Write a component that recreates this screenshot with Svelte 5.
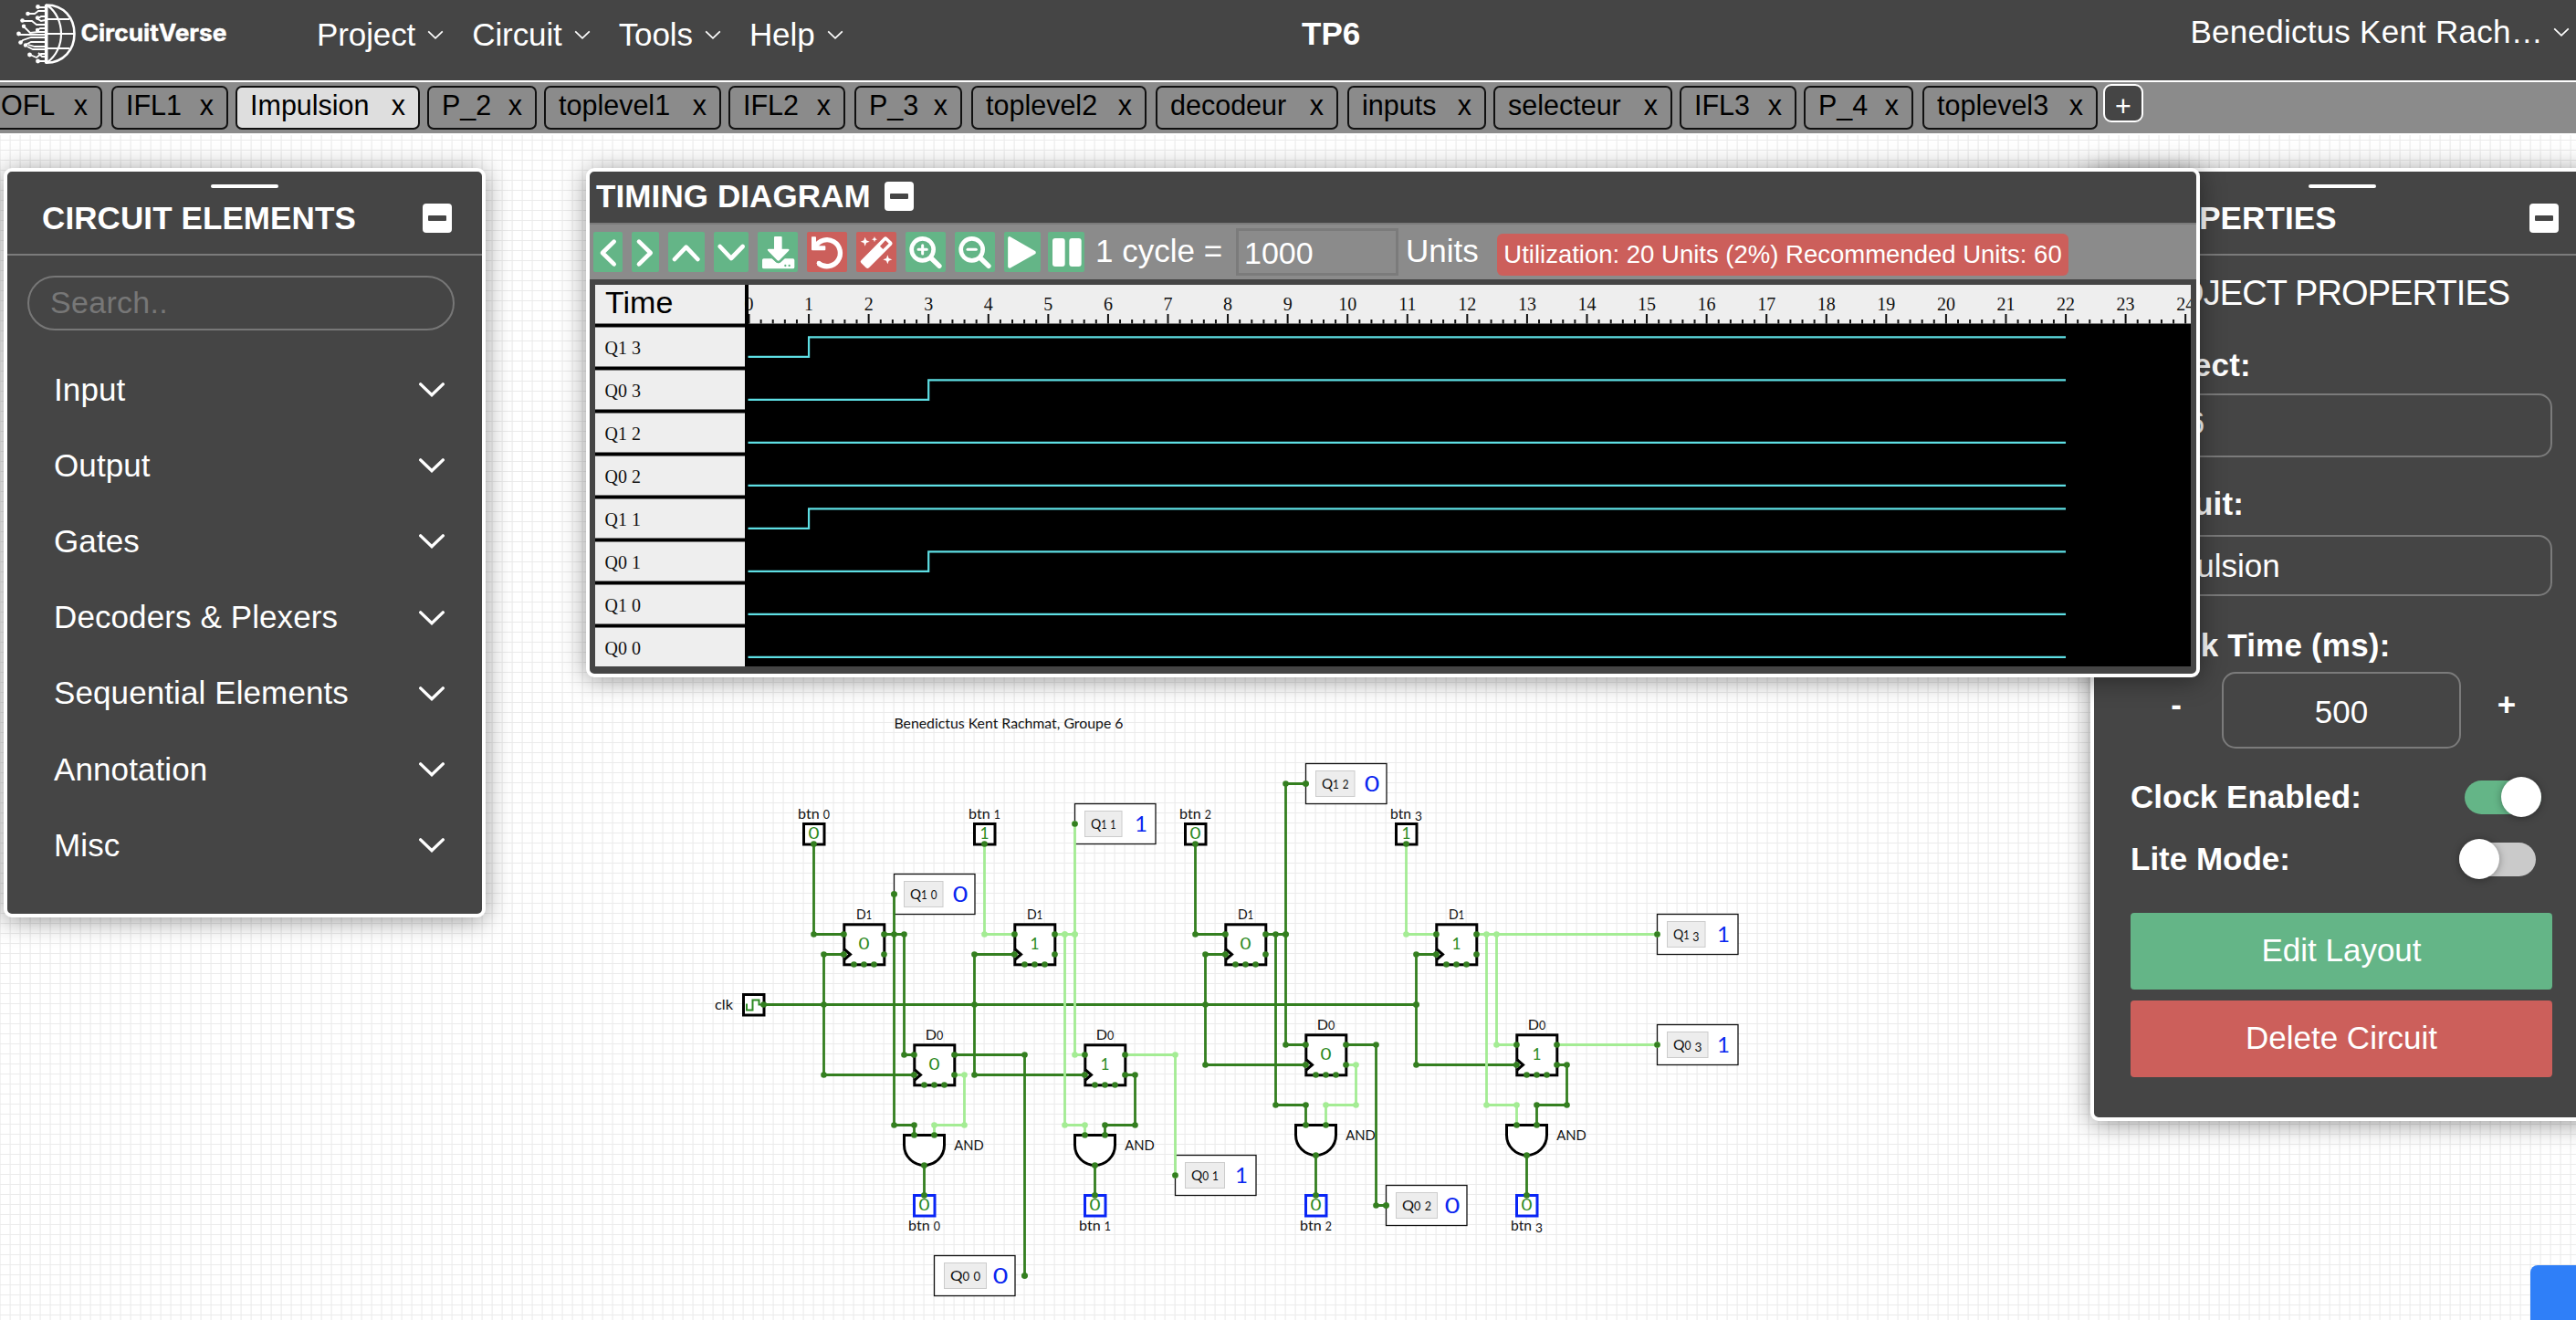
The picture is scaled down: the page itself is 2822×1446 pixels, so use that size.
<script>
  const menus = ['Project', 'Circuit', 'Tools', 'Help'];

  const tabs = [
    { name: 'OFL', width: 127, gap: 10 },
    { name: 'IFL1', width: 128, gap: 8 },
    { name: 'Impulsion', width: 202, gap: 8, active: true },
    { name: 'P_2', width: 120, gap: 8 },
    { name: 'toplevel1', width: 194, gap: 8 },
    { name: 'IFL2', width: 128, gap: 10 },
    { name: 'P_3', width: 118, gap: 10 },
    { name: 'toplevel2', width: 192, gap: 10 },
    { name: 'decodeur', width: 200, gap: 10 },
    { name: 'inputs', width: 152, gap: 8 },
    { name: 'selecteur', width: 196, gap: 8 },
    { name: 'IFL3', width: 128, gap: 8 },
    { name: 'P_4', width: 120, gap: 10 },
    { name: 'toplevel3', width: 192, gap: 6 }
  ];

  const categories = ['Input', 'Output', 'Gates', 'Decoders & Plexers', 'Sequential Elements', 'Annotation', 'Misc'];

  // Timing plot: one time unit is `unit` pixels wide, one signal row is 47 pixels tall.
  const unit = 65.57;
  const origin = 168.5;
  const signals = [
    { name: 'Q1 3', rise: 1 },
    { name: 'Q0 3', rise: 3 },
    { name: 'Q1 2', rise: null },
    { name: 'Q0 2', rise: null },
    { name: 'Q1 1', rise: 1 },
    { name: 'Q0 1', rise: 3 },
    { name: 'Q1 0', rise: null },
    { name: 'Q0 0', rise: null }
  ];
  const ticks = Array.from({ length: 122 }, (_, i) => i);

  function trace(rise, row) {
    const low = 78.8 + row * 47;
    const high = low - 21.5;
    const end = origin + 22 * unit;
    if (rise === null) return `M${origin - 1} ${low}H${end}`;
    return `M${origin - 1} ${low}H${origin + rise * unit}V${high}H${end}`;
  }

  // Schematic coordinates are in grid cells.
  const G = 11;
  const px = (n) => n * G + 0.5;
  const wires = [
    { on: 0, p: [[81, 84], [81, 93], [84, 93]] },
    { on: 0, p: [[76, 100], [141, 100]] },
    { on: 0, p: [[84, 95], [82, 95], [82, 107], [91, 107]] },
    { on: 0, p: [[101, 95], [97, 95], [97, 107], [108, 107]] },
    { on: 0, p: [[122, 95], [120, 95], [120, 106], [130, 106]] },
    { on: 0, p: [[143, 95], [141, 95], [141, 106], [151, 106]] },
    { on: 0, p: [[88, 93], [90, 93], [90, 105], [91, 105]] },
    { on: 0, p: [[89, 89], [89, 112], [91, 112], [91, 113]] },
    { on: 0, p: [[95, 105], [102, 105], [102, 127]] },
    { on: 1, p: [[95, 107], [96, 107], [96, 112], [93, 112], [93, 113]] },
    { on: 0, p: [[92, 116], [92, 119]] },
    { on: 1, p: [[98, 84], [98, 93], [101, 93]] },
    { on: 1, p: [[105, 93], [107, 93], [107, 105], [108, 105]] },
    { on: 1, p: [[107, 82], [107, 93]] },
    { on: 1, p: [[106, 93], [106, 112], [108, 112], [108, 113]] },
    { on: 1, p: [[112, 105], [117, 105], [117, 117]] },
    { on: 0, p: [[112, 107], [113, 107], [113, 112], [110, 112], [110, 113]] },
    { on: 0, p: [[109, 116], [109, 119]] },
    { on: 0, p: [[119, 84], [119, 93], [122, 93]] },
    { on: 0, p: [[126, 93], [128, 93], [128, 104], [130, 104]] },
    { on: 0, p: [[130, 78], [128, 78], [128, 93]] },
    { on: 0, p: [[127, 93], [127, 110], [130, 110], [130, 112]] },
    { on: 0, p: [[134, 104], [137, 104], [137, 120], [138, 120]] },
    { on: 1, p: [[134, 106], [135, 106], [135, 110], [132, 110], [132, 112]] },
    { on: 0, p: [[131, 115], [131, 119]] },
    { on: 1, p: [[140, 84], [140, 93], [143, 93]] },
    { on: 1, p: [[147, 93], [165, 93]] },
    { on: 1, p: [[149, 93], [149, 104], [151, 104]] },
    { on: 1, p: [[148, 93], [148, 110], [151, 110], [151, 112]] },
    { on: 1, p: [[155, 104], [165, 104]] },
    { on: 0, p: [[155, 106], [156, 106], [156, 110], [153, 110], [153, 112]] },
    { on: 0, p: [[152, 115], [152, 119]] }
  ];
  const taps = [[82, 100], [97, 100], [120, 100], [141, 100], [89, 93]];
  const ends = [[89, 89], [107, 82], [117, 117], [102, 127], [130, 78], [138, 120], [165, 93], [165, 104], [76, 100]];
  const flops = [
    { x: 86, y: 94, name: 'D1', v: '0' }, { x: 93, y: 106, name: 'D0', v: '0' },
    { x: 103, y: 94, name: 'D1', v: '1' }, { x: 110, y: 106, name: 'D0', v: '1' },
    { x: 124, y: 94, name: 'D1', v: '0' }, { x: 132, y: 105, name: 'D0', v: '0' },
    { x: 145, y: 94, name: 'D1', v: '1' }, { x: 153, y: 105, name: 'D0', v: '1' }
  ];
  const inputs = [
    { x: 81, name: 'btn 0', v: '0' }, { x: 98, name: 'btn 1', v: '1' },
    { x: 119, name: 'btn 2', v: '0' }, { x: 140, name: 'btn 3', v: '1' }
  ];
  const gates = [
    { x: 92, y: 113, name: 'btn 0' }, { x: 109, y: 113, name: 'btn 1' },
    { x: 131, y: 112, name: 'btn 2' }, { x: 152, y: 112, name: 'btn 3' }
  ];
  const flags = [
    { x: 89, y: 89, name: 'Q1 0', w: 42.5, v: '0' },
    { x: 107, y: 82, name: 'Q1 1', w: 40.5, v: '1' },
    { x: 130, y: 78, name: 'Q1 2', w: 42.5, v: '0' },
    { x: 165, y: 93, name: 'Q1 3', w: 41.5, v: '1' },
    { x: 165, y: 104, name: 'Q0 3', w: 44.5, v: '1' },
    { x: 138, y: 120, name: 'Q0 2', w: 45, v: '0' },
    { x: 117, y: 117, name: 'Q0 1', w: 43, v: '1' },
    { x: 93, y: 127, name: 'Q0 0', w: 46, v: '0' }
  ];

  // Old-style figures: 0-2 sit at x-height, 3 hangs below the baseline.
  const figures = (s) => [...s].map((c, i, a) => ({
    c: c === ' ' ? '\u00a0' : c,
    size: '012'.includes(c) ? 12.4 : c === '3' ? 14 : 16,
    dy: (c === '3' ? 2 : 0) - (a[i - 1] === '3' ? 2 : 0)
  }));
</script>

{#snippet chevron(cls)}
  <svg class={cls} viewBox="0 0 30 18"><path d="M2 2L15 14.5L28 2" /></svg>
{/snippet}

{#snippet minus()}
  <svg class="minus" viewBox="0 0 32 32"><rect width="32" height="32" rx="4" fill="#fff" /><rect x="6" y="13" width="20" height="6" rx="1" fill="#454545" /></svg>
{/snippet}

{#snippet label(x, y, s, w, anchor = 'middle')}
  <text {x} {y} text-anchor={anchor} textLength={w} lengthAdjust="spacingAndGlyphs" class="lbl">{#each figures(s) as f}<tspan font-size={f.size} dy={f.dy}>{f.c}</tspan>{/each}</text>
{/snippet}

{#snippet digit(x, y, v)}
  <text {x} {y} text-anchor="middle" class="digit" textLength={v === '0' ? 12 : 10} lengthAdjust="spacingAndGlyphs">{v}</text>
{/snippet}

<div class="app">
  <header>
    <svg class="logo" viewBox="0 0 260 75">
      <g fill="none" stroke="#fff" stroke-width="2.2">
        <path d="M50.7 5V69.5" stroke-width="3.6" />
        <path d="M50 5.5C70 5 81.500 20 81.500 37S70 69 50 68.700" stroke-width="2.600" />
        <path d="M52 6C72 20 72 54 52 68M51 21H76M51 37H82M51 53H76" />
        <path d="M50 8H42M50 12H42L38 15H31M50 18H45L42 20M50 22L45 23L40 20M50 27H40L35 23H25M50 31H44L41 33M50 35H42L33 36L26 29M50 38H21M50 41H34L25 44L22 47M50 46H34L28 49M50 51H38L31 49M50 54H36L30 51M50 59H45L40 63L33 60M50 62H46L42 58M50 67H42" stroke-width="1.800" />
      </g>
      <g fill="#fff">
        <circle cx="41.500" cy="7.500" r="2.400" /><circle cx="30.500" cy="15" r="2.300" /><circle cx="24.500" cy="22.500" r="2.300" />
        <circle cx="26" cy="28.800" r="2.200" /><circle cx="20.500" cy="37" r="2.400" /><circle cx="22.500" cy="46.500" r="2.300" />
        <circle cx="28" cy="49.500" r="2.200" /><circle cx="32.500" cy="60" r="2.400" /><circle cx="41.500" cy="67" r="2.400" />
        <circle cx="41" cy="19.500" r="2.200" /><circle cx="41" cy="33" r="2.200" />
      </g>
      <text x="88.500" y="45.300" textLength="160" lengthAdjust="spacingAndGlyphs" class="brand">CircuitVerse</text>
    </svg>
    <nav>
      {#each menus as m}<div class="menu"><span>{m}</span>{@render chevron('small')}</div>{/each}
    </nav>
    <div class="title">TP6</div>
    <div class="user"><span>Benedictus Kent Rach…</span>{@render chevron('small')}</div>
  </header>

  <div class="tabs">
    {#each tabs as t}
      <div class="tab" class:active={t.active} style:width="{t.width}px" style:margin-right="{t.gap}px"><span>{t.name}</span><span>x</span></div>
    {/each}
    <div class="add">+</div>
  </div>

  <main>
    <svg class="board" viewBox="0 148 2822 1298">
      <defs>
        <pattern id="grid" width="11" height="11" patternUnits="userSpaceOnUse">
          <rect x="0" y="0" width="1" height="11" fill="#f2f2f2" />
          <rect x="10" y="0" width="1" height="11" fill="#f6f6f6" />
          <rect x="0" y="10" width="11" height="1" fill="#ebebeb" />
        </pattern>
      </defs>
      <rect y="148" width="2822" height="1298" fill="url(#grid)" />

      <text x="979.500" y="798" textLength="251" lengthAdjust="spacingAndGlyphs" class="lbl" font-size="16">Benedictus Kent Rachmat, Groupe 6</text>

      {#each flags as f}
        <rect x={px(f.x)} y={px(f.y) - 22} width="88.500" height="44" fill="#fff" stroke="#111" stroke-width="1.300" />
        <rect x={px(f.x) + 11} y={px(f.y) - 14} width={f.w} height="28" fill="#ededed" stroke="#ccc" />
        {@render label(px(f.x) + 11 + f.w / 2, px(f.y) + 5.5, f.name, f.w - 13)}
        <text x={px(f.x) + 72.5} y={px(f.y) + 8.6} text-anchor="middle" class="value" textLength={f.v === '0' ? 16.5 : 14} lengthAdjust="spacingAndGlyphs">{f.v}</text>
      {/each}

      {#each gates as g}{@render label(px(g.x) + 49, px(g.y) + 16, 'AND', 32.5)}{/each}

      {#each wires as w}
        <polyline points={w.p.map(([x, y]) => `${px(x)},${px(y)}`).join(' ')} class="wire" class:on={w.on} />
        {#each w.p as [x, y]}<circle cx={px(x)} cy={px(y)} r="3.300" class="node" class:on={w.on} />{/each}
      {/each}
      {#each taps as [x, y]}<circle cx={px(x)} cy={px(y)} r="3.300" class="node" />{/each}
      <circle cx={px(106)} cy={px(93)} r="3.300" class="node on" />

      {#each inputs as b}
        <rect x={px(b.x) - 11} y={px(83) - 11} width="22.500" height="22.500" class="part" />
        {@render label(px(b.x), 896.5, b.name, 35)}
        {@render digit(px(b.x), 919, b.v)}
        <circle cx={px(b.x)} cy={px(84)} r="3.300" class="node" />
      {/each}

      <rect x={px(75) - 11} y={px(100) - 11} width="22.500" height="22.500" class="part" />
      <path d="M818 1099.500V1106.500H824.500V1095.500H831.500V1100.500H836" fill="none" stroke="#2c8a22" stroke-width="2" />
      {@render label(793, 1105.5, 'clk', 20)}

      {#each flops as f}
        <rect x={px(f.x) - 21.7} y={px(f.y) - 21.7} width="44" height="44" class="part" />
        <path d="M{px(f.x) - 22} {px(f.y) + 5}L{px(f.x) - 15} {px(f.y) + 11}L{px(f.x) - 22} {px(f.y) + 17}" class="part" />
        {@render label(px(f.x), px(f.y) - 28, f.name, f.name === 'D1' ? 17 : 19.5)}
        {@render digit(px(f.x), px(f.y) + 5.6, f.v)}
        {#each [[-2, -1], [-2, 1], [2, -1], [2, 1], [-1, 2], [0, 2], [1, 2]] as [dx, dy]}
          <circle cx={px(f.x + dx)} cy={px(f.y + dy)} r="3.300" class="node" />
        {/each}
      {/each}

      {#each gates as g}
        <path d="M{px(g.x) - 22} {px(g.y)}H{px(g.x) + 22}V{px(g.y) + 11}A22 22 0 0 1 {px(g.x) - 22} {px(g.y) + 11}Z" class="part" />
        <rect x={px(g.x) - 11} y={px(120) - 11} width="22.500" height="22.500" class="part out" />
        {@render digit(px(g.x), 1325.5, '0')}
        {@render label(px(g.x), 1347.5, g.name, 35)}
        {#each [[g.x - 1, g.y], [g.x + 1, g.y], [g.x, g.y + 3], [g.x, 119]] as [x, y]}
          <circle cx={px(x)} cy={px(y)} r="3.300" class="node" />
        {/each}
      {/each}
      {#each ends as [x, y]}<circle cx={px(x)} cy={px(y)} r="3.300" class="node" />{/each}
    </svg>

    <section class="panel elements">
      <div class="head"><i class="grip"></i><div class="headrow"><b>CIRCUIT ELEMENTS</b>{@render minus()}</div></div>
      <div class="search">Search..</div>
      <ul>
        {#each categories as c}<li><span>{c}</span>{@render chevron('big')}</li>{/each}
      </ul>
    </section>

    <section class="panel properties">
      <div class="head"><i class="grip"></i><div class="headrow"><b>PROPERTIES</b>{@render minus()}</div></div>
      <div class="body">
        <h2>PROJECT PROPERTIES</h2>
        <label class="project" for="p">Project:</label>
        <div class="field first" id="p">TP6</div>
        <label class="circuit" for="c">Circuit:</label>
        <div class="field second" id="c">Impulsion</div>
        <label class="clock" for="t">Clock Time (ms):</label>
        <div class="stepper"><b>-</b><div class="field interval" id="t">500</div><b>+</b></div>
        <div class="switch enabled"><b>Clock Enabled:</b><i class="track on"></i></div>
        <div class="switch lite"><b>Lite Mode:</b><i class="track"></i></div>
        <div class="btn green">Edit Layout</div>
        <div class="btn red">Delete Circuit</div>
      </div>
    </section>

    <section class="panel timing">
      <div class="timehead"><b>TIMING DIAGRAM</b>{@render minus()}</div>
      <div class="toolbar">
        <svg width="32" viewBox="0 0 96 132"><path class="ln" d="M68 32L30 69L68 106" /></svg>
        <svg width="30" viewBox="0 0 90 132"><path class="ln" d="M24 32L62 69L24 106" /></svg>
        <svg width="40" viewBox="0 0 120 132"><path class="ln" d="M21 90L59 50L97 90" /></svg>
        <svg width="38" viewBox="0 0 114 132"><path class="ln" d="M20 48L57 87L95 48" /></svg>
        <svg width="44" viewBox="0 0 132 132">
          <path d="M54 18Q54 15 57 15H77Q80 15 80 18V56H100Q106 57 102 62L72 93Q68 97 64 93L34 62Q30 57 36 56H54Z" />
          <path d="M20 88H48L60 100Q68 106 76 100L88 88H116Q121 88 121 93V116Q121 121 116 121H20Q15 121 15 116V93Q15 88 20 88Z" />
          <path d="M36 76L63 99Q68 103 73 99L100 76" fill="none" stroke="#64b587" stroke-width="3.500" />
          <circle cx="91" cy="111" r="3.500" fill="#64b587" /><circle cx="104" cy="111" r="3.500" fill="#64b587" />
        </svg>
        <svg width="44" viewBox="0 0 132 132" class="danger">
          <path d="M15 18Q15 16 17 16H27Q30 16 30 19V46H58Q61 46 61 49V58Q61 61 58 61H18Q15 61 15 58Z" />
          <path d="M27 50A43.500 43.500 0 1 1 38 103" fill="none" stroke="#fff" stroke-width="16" />
          <circle cx="39" cy="102.500" r="7" />
        </svg>
        <svg width="44" viewBox="0 0 132 132" class="danger">
          <path d="M16 94L91 18Q96 13 101 18L117 33Q121 38 117 43L42 118Q37 122 32 118L16 102Q12 98 16 94Z" />
          <path d="M78 47L96 28L107 38L88 57Z" fill="#cc5f5b" />
          <path d="M29 17L33 28L44 32L33 36L29 47L25 36L14 32L25 28ZM60 15L62.500 22L69 24.500L62.500 27L60 34L57.500 27L51 24.500L57.500 22ZM103 76L107 87L118 91L107 95L103 106L99 95L88 91L99 87Z" />
        </svg>
        <svg width="44" viewBox="0 0 132 132"><circle cx="56" cy="58" r="36" class="lens" /><path class="handle" d="M85 87L111 112" /><path class="sign" d="M42 58H70M56 44V72" /></svg>
        <svg width="44" viewBox="0 0 132 132"><circle cx="56" cy="58" r="36" class="lens" /><path class="handle" d="M85 87L111 112" /><path class="sign" d="M42 58H70" /></svg>
        <svg width="40" viewBox="0 0 120 132" class="play"><path d="M18 21V114L99 68Z" stroke="#fff" stroke-width="11" stroke-linejoin="round" /></svg>
        <svg width="40" viewBox="0 0 120 132"><rect x="15" y="21" width="41" height="93" rx="9" /><rect x="70" y="21" width="40" height="93" rx="9" /></svg>
        <span class="cycle">1 cycle =</span>
        <div class="units">1000</div>
        <span class="unitlabel">Units</span>
        <div class="badge">Utilization: 20 Units (2%) Recommended Units: 60</div>
      </div>
      <svg class="plot" viewBox="0 0 1748 418">
        <rect width="1748" height="418" fill="#000" />
        <rect width="164" height="42.500" fill="#eee" />
        <rect x="168" width="1580" height="42.500" fill="#eee" />
        <text x="11" y="30.500" class="timecol">Time</text>
        {#each ticks as i}
          <rect x={origin - 1 + (i * unit) / 5} y={i % 5 ? 38 : 32} width="2" height={i % 5 ? 4.5 : 10.5} fill="#111" />
          {#if i % 5 === 0}<text x={origin + (i * unit) / 5} y="27.500" text-anchor="middle" class="num">{i / 5}</text>{/if}
        {/each}
        <rect x="164" width="4" height="43" fill="#000" />
        {#each signals as s, i}
          <rect y={46.5 + i * 47} width="164" height="43" fill="#eee" />
          <text x="10.500" y={76 + i * 47} class="num">{s.name}</text>
          <path d={trace(s.rise, i)} fill="none" stroke="#5edfe4" stroke-width="2.200" />
        {/each}
      </svg>
    </section>

    <div class="report"></div>
  </main>
</div>

<style>
  :global(body) { margin: 0; background: #fff; }
  * { box-sizing: border-box; }
  .app { width: 2822px; height: 1446px; overflow: hidden; display: flex; flex-direction: column; font: 35px/40px "Liberation Sans", Arial, sans-serif; color: #fff; background: #fff; }
  header { height: 90px; flex: none; background: #454545; border-bottom: 2px solid #fff; display: flex; align-items: flex-start; }
  .logo { width: 260px; height: 75px; }
  .brand { font: 700 25px Inter, sans-serif; fill: #fff; stroke: #fff; stroke-width: .4px; }
  nav { display: flex; gap: 31px; padding: 18px 0 0 87px; width: 1166px; }
  .menu, .user { display: flex; align-items: center; }
  .menu span { letter-spacing: -.1px; }
  .small { width: 18px; height: 11px; margin-left: 13px; }
  .small path { fill: none; stroke: #fff; stroke-width: 2.8; }
  .title { font-weight: 700; padding-top: 17px; }
  .user { margin-left: auto; padding: 15px 7px 0 0; }
  .user span { letter-spacing: .25px; }
  .user .small { margin-left: 11px; }

  .tabs { height: 56px; flex: none; background: #8b8b8b; display: flex; align-items: flex-start; padding-top: 4px; font-size: 30.5px; color: #000; }
  .tab { height: 48px; flex: none; border: 2px solid #101010; border-radius: 7px; display: flex; justify-content: space-between; align-items: center; padding: 0 14px 7px 14px; }
  .tab:first-child { margin-left: -15px; }
  .tab.active { background: #dedede; }
  .add { width: 44px; height: 42px; margin-top: -2px; border: 2px solid #fff; border-radius: 9px; background: #454545; color: #fff; display: flex; align-items: center; justify-content: center; padding-top: 6px; }

  main { position: relative; flex: 1; padding-top: 2px; }
  .board { display: block; width: 2822px; height: 1298px; }
  .lbl { font-family: Lato, sans-serif; fill: #111; }
  .digit { font: 16.5px Lato, sans-serif; fill: #2c8a22; }
  .value { font: 24px Lato, sans-serif; fill: #0a26f0; }
  .wire { fill: none; stroke: #347f20; stroke-width: 2.8; }
  .wire.on { stroke: #a4ec94; }
  .node { fill: #347f20; }
  .node.on { fill: #a4ec94; }
  .part { fill: #fff; stroke: #000; stroke-width: 3; }
  .part.out { stroke: #0a26f5; }

  .panel { position: absolute; background: #454545; border: 4px solid #fff; border-radius: 9px; box-shadow: 0 3px 28px rgba(0, 0, 0, .42); display: flex; flex-direction: column; }
  .head { height: 92px; flex: none; border-bottom: 2px solid #7b7b7b; padding-top: 14px; display: flex; flex-direction: column; align-items: center; }
  .grip { width: 74px; height: 4px; border-radius: 2px; background: #fff; }
  .headrow { align-self: stretch; height: 68px; display: flex; justify-content: space-between; align-items: center; padding: 0 33px 2px 38px; }
  .headrow b { letter-spacing: .1px; }
  .minus { width: 32px; height: 32px; }

  .elements { left: 4px; top: 38px; width: 528px; height: 821px; }
  .search { margin: 22px 30px 0 22px; height: 60px; border: 2px solid #777; border-radius: 30px; padding: 7px 0 0 23px; color: #777; font-size: 34px; letter-spacing: .3px; }
  ul { list-style: none; margin: 23px 0 0; padding: 0 40px 0 51px; }
  li { height: 83.2px; display: flex; justify-content: space-between; align-items: center; letter-spacing: .1px; }
  .big { width: 30px; height: 17px; margin-top: 2px; }
  .big path { fill: none; stroke: #fff; stroke-width: 3.6; stroke-linecap: round; }

  .properties { left: 2290px; top: 38px; width: 552px; height: 1044px; }
  .properties .headrow { padding: 0 35px 2px 39px; }
  .body { padding: 0 42px 0 40px; display: flex; flex-direction: column; }
  h2 { font-size: 38px; font-weight: 400; line-height: 50px; margin: 16px -40px 0 0; letter-spacing: -.9px; white-space: nowrap; }
  label { font-weight: 700; letter-spacing: .2px; }
  .project { margin-top: 34px; }
  .circuit { margin-top: 31px; }
  .clock { margin-top: 34px; }
  .field { border: 2px solid #7b7b7b; border-radius: 15px; padding-left: 12px; }
  .first { margin-top: 11px; height: 70px; padding: 10px 0 0 15px; }
  .second { margin-top: 14px; height: 67px; padding-top: 12px; }
  .stepper { margin-top: 9px; display: grid; grid-template-columns: 100px 262px 100px; text-align: center; line-height: 71px; }
  .interval { height: 84px; padding: 0; line-height: 84px; }
  .switch { display: flex; justify-content: space-between; align-items: center; height: 40px; padding-right: 12px; }
  .enabled { margin-top: 33px; }
  .lite { margin-top: 28px; padding-right: 18px; }
  .track { width: 84px; height: 37px; border-radius: 19px; background: #cacaca; display: flex; align-items: center; }
  .track::before { content: ""; width: 44px; height: 44px; flex: none; border-radius: 50%; background: #fff; box-shadow: 0 1px 8px rgba(0, 0, 0, .35); }
  .track.on { background: #64b587; justify-content: flex-end; }
  .btn { height: 84px; line-height: 82px; border-radius: 4px; text-align: center; }
  .green { margin-top: 39px; background: #64b587; }
  .red { margin-top: 12px; background: #cc5f5b; }

  .timing { left: 642px; top: 38px; width: 1768px; height: 558px; }
  .timehead { height: 56px; flex: none; display: flex; align-items: center; gap: 15px; padding: 0 0 2px 7px; letter-spacing: .1px; }
  .toolbar { height: 62px; flex: none; background: #8b8b8b; border-top: 2px solid #7b7b7b; display: flex; align-items: flex-start; padding: 8px 0 0 4px; }
  .toolbar svg { height: 44px; flex: none; margin-right: 10px; border-radius: 2px; background: #64b587; fill: #fff; }
  .toolbar .play { margin-right: 8px; }
  .toolbar .danger { background: #cc5f5b; }
  .ln { fill: none; stroke: #fff; stroke-width: 14; stroke-linecap: round; stroke-linejoin: round; }
  .lens { fill: none; stroke: #fff; stroke-width: 14; }
  .handle { fill: none; stroke: #fff; stroke-width: 16; stroke-linecap: round; }
  .sign { fill: none; stroke: #fff; stroke-width: 9; stroke-linecap: round; }
  .cycle { width: 153px; padding: 1px 0 0 2px; white-space: nowrap; }
  .units { width: 178px; height: 52px; margin: -4px 0 0 3px; border: 3px solid #7b7b7b; padding: 4px 0 0 6px; font-size: 34px; }
  .unitlabel { width: 102px; padding: 1px 0 0 8px; }
  .badge { margin: 2px 0 0 6px; height: 46px; width: 626px; border-radius: 6px; background: #cc5f5b; font-size: 27.5px; line-height: 46px; text-align: center; white-space: nowrap; }
  .plot { width: 1748px; height: 418px; margin: 6px 0 0 6px; }
  .timecol { font-size: 34px; fill: #000; }
  .num { font: 20px "Liberation Serif", serif; fill: #111; }

  .report { position: absolute; right: 0; bottom: 0; width: 50px; height: 60px; border-radius: 8px 0 0; background: #2f7ff8; }
</style>
